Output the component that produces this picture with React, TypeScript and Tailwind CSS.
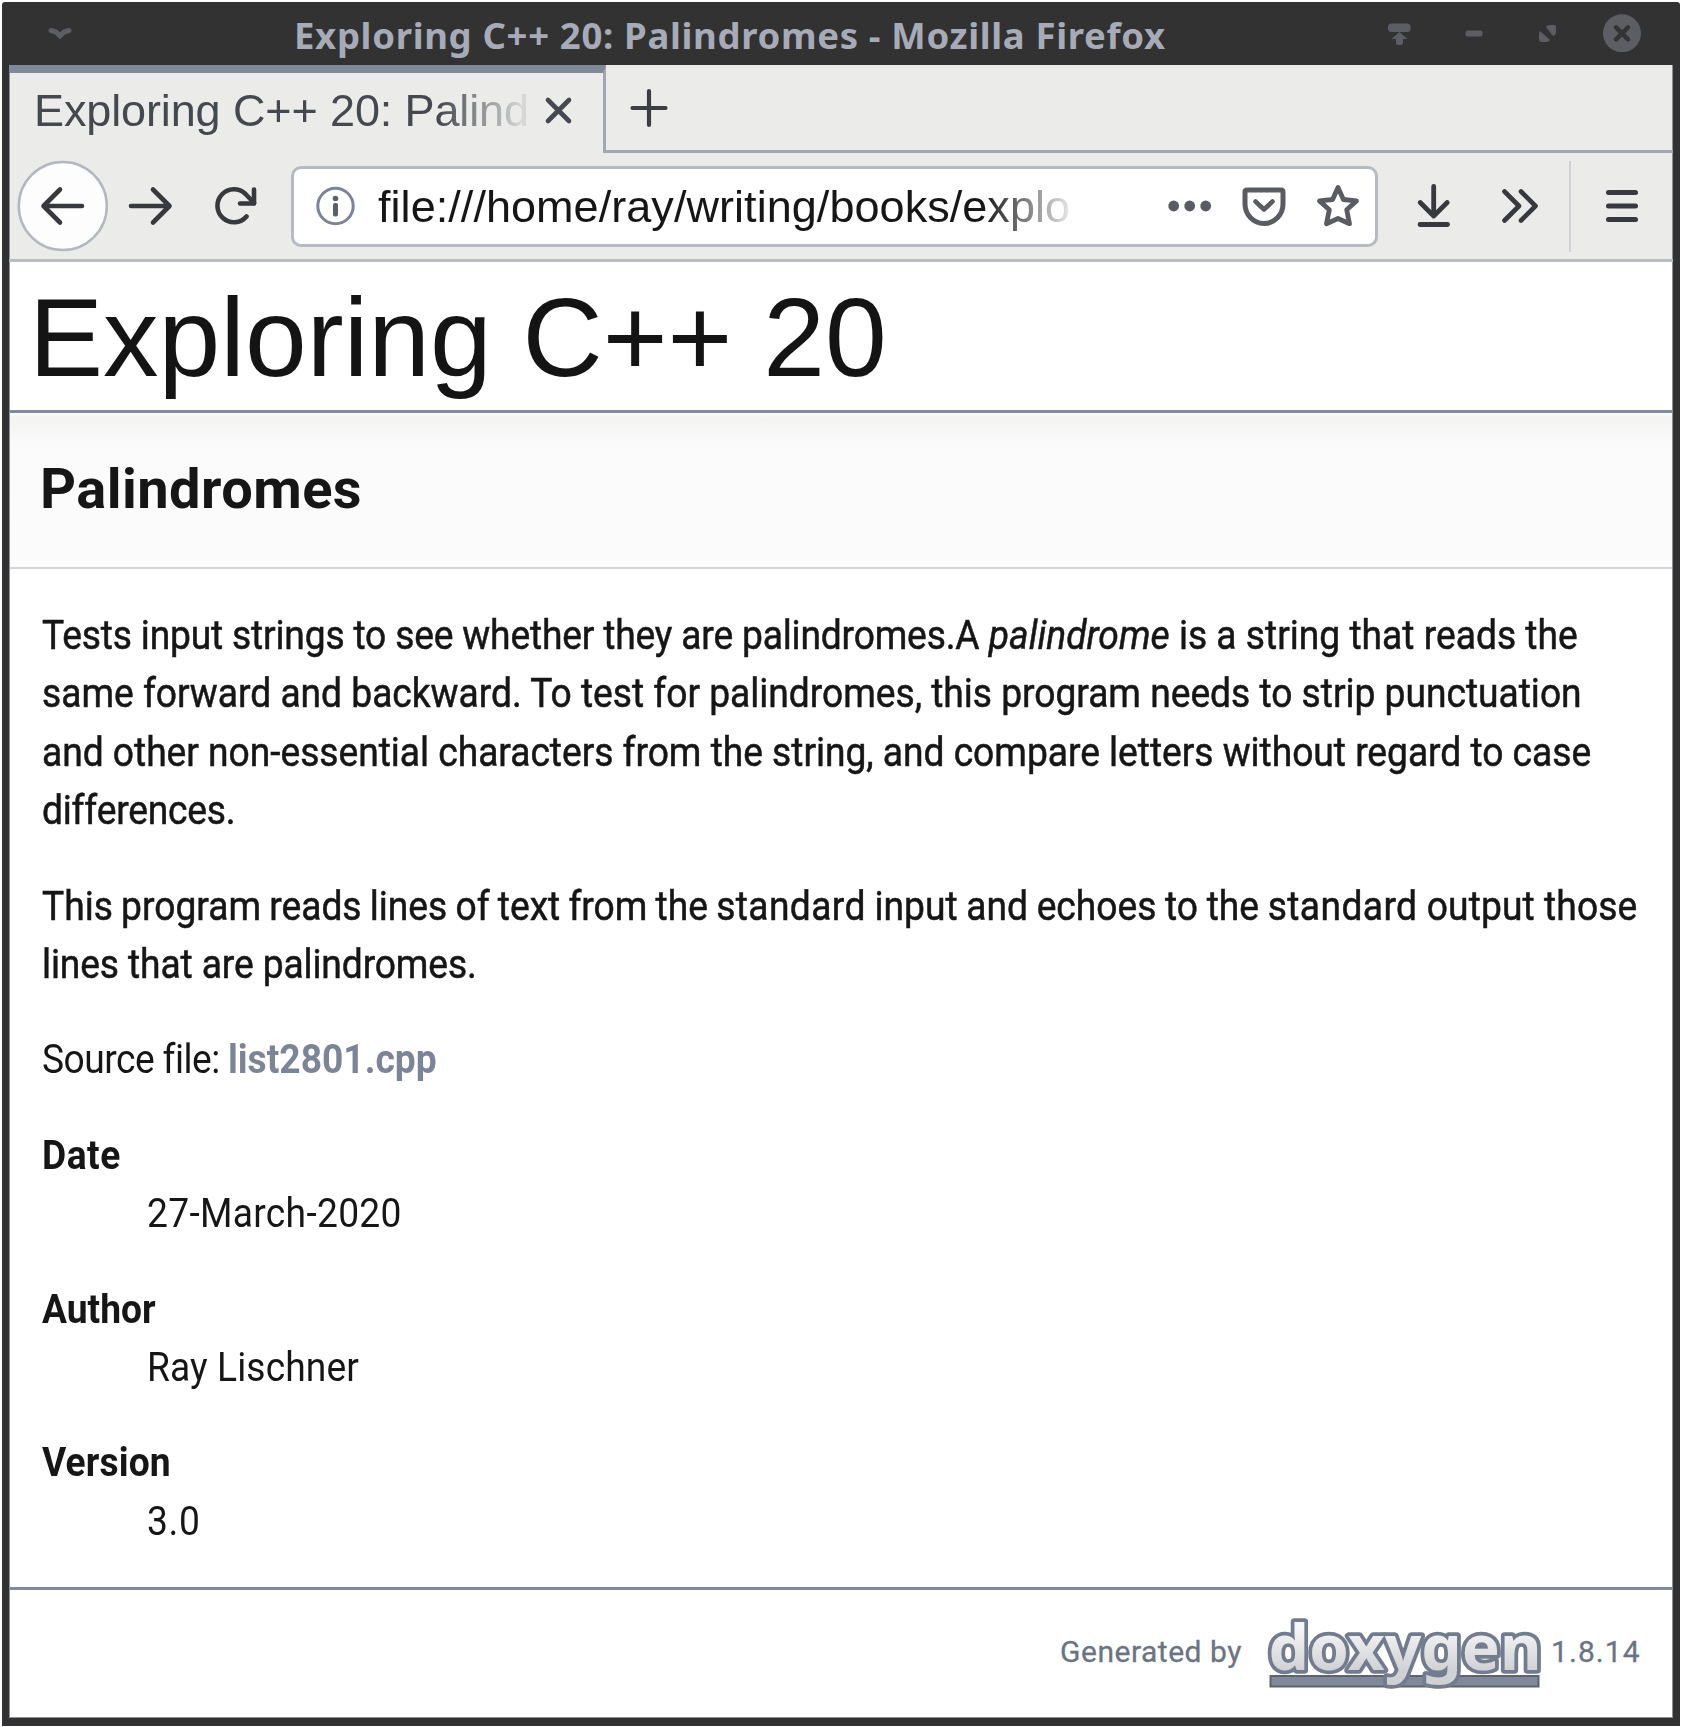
import React, { type ReactNode } from 'react';

function Icon({ box, className = '', children }: { box: string; className?: string; children: ReactNode }) {
  const [, , w, h] = box.split(' ');
  return (
    <svg
      viewBox={box}
      width={w}
      height={h}
      fill="none"
      stroke="currentColor"
      strokeWidth={4.6}
      strokeLinecap="round"
      strokeLinejoin="round"
      className={`block shrink-0 ${className}`}
    >
      {children}
    </svg>
  );
}

function TitleBar() {
  return (
    <header className="flex h-[63px] shrink-0 items-start text-[#5c5e64]">
      <Icon box="46 20 30 26" className="ml-[44px] mt-[18px]">
        <path d="M51 30.500l5 1.500l4 4l4 -4l5 -1.500" strokeWidth={5} strokeLinejoin="miter" />
      </Icon>
      <h1 className="ml-[218px] mt-[8px] w-[900px] whitespace-nowrap font-['Noto_Sans'] text-[36.500px] font-bold leading-[50px] tracking-[0.670px] text-[#a6abb7]">
        Exploring C++ 20: Palindromes - Mozilla Firefox
      </h1>
      <Icon box="1384 14 32 38" className="ml-[190px] mt-[12px]">
        <g fill="currentColor" stroke="none">
          <rect x="1388" y="23.500" width="22.500" height="8.500" rx="3.500" />
          <path d="M1399.500 32l8 7h-4.500v4q0 2 -3.500 2t-3.500 -2v-4h-4.500z" />
        </g>
      </Icon>
      <Icon box="1462 14 24 38" className="ml-[46px] mt-[12px]">
        <rect x="1465.500" y="30.500" width="17" height="6" rx="2.500" fill="currentColor" stroke="none" />
      </Icon>
      <Icon box="1534 14 28 38" className="ml-[48px] mt-[12px]">
        <g fill="currentColor" stroke="none">
          <path d="M1546 27q1 -2 4 -2h4q2 0 2 2v5q0 3 -3 4z" />
          <path d="M1540 31l10 9q-1 2 -4 2h-4q-3 0 -3 -3v-5q0 -2 1 -3z" />
        </g>
      </Icon>
      <Icon box="1602 14 40 38" className="ml-[40px] mt-[12px]">
        <circle cx="1622" cy="33.300" r="19" fill="currentColor" stroke="none" />
        <path d="M1616 27.300l12 12m0 -12l-12 12" stroke="#333" strokeWidth={4.500} />
      </Icon>
    </header>
  );
}

function TabStrip() {
  return (
    <div className="flex h-[88px] shrink-0 text-[#3c3e43]">
      <div className="flex w-[597px] shrink-0 border-r-[3px] border-t-[8px] border-r-[#a1a6b2] border-t-[#7f899b] text-[#45484e]">
        <div className="ml-[25px] mt-[11px] w-[495px] overflow-hidden whitespace-nowrap font-['Liberation_Sans'] text-[45px] leading-[54px] tracking-[-0.120px] [mask-image:linear-gradient(to_right,black_405px,rgba(0,0,0,0.12)_488px)]">
          Exploring C++ 20: Palind
        </div>
        <Icon box="540 90 36 42" className="ml-[11px] mt-[17px]">
          <path d="M548 100l21 21m0 -21l-21 21" />
        </Icon>
      </div>
      <div className="flex flex-1 border-b-[3px] border-[#a1a6b2]">
        <Icon box="626 84 46 48" className="ml-[20px] mt-[19px]">
          <path d="M632.500 108h33m-16.500 -17v34" strokeWidth={4.200} />
        </Icon>
      </div>
    </div>
  );
}

function AddressBox() {
  return (
    <div className="ml-[29px] flex h-[81px] w-[1087px] shrink-0 items-center rounded-[10px] border-[3px] border-[#b6bac3] bg-white">
      <Icon box="315 185 42 42" className="ml-[21px] text-[#7c8597]">
        <circle cx="335.500" cy="206" r="17.700" strokeWidth={3} />
        <g fill="#5c6068" stroke="none">
          <circle cx="335.500" cy="198.500" r="2.800" />
          <rect x="333" y="203" width="5" height="13.500" rx="2" />
        </g>
      </Icon>
      <div className="ml-[21px] mt-[2px] w-[701px] overflow-hidden whitespace-nowrap font-['Liberation_Sans'] text-[45px] leading-[60px] tracking-[0.050px] text-[#161616] [mask-image:linear-gradient(to_right,black_605px,rgba(0,0,0,0.12)_690px)]">
        file:///home/ray/writing/books/explo
      </div>
      <Icon box="1166 185 48 42" className="ml-[87px] text-[#5a5c61]">
        <g fill="currentColor" stroke="none">
          <circle cx="1173.700" cy="206" r="5.400" />
          <circle cx="1189.700" cy="206" r="5.400" />
          <circle cx="1205.700" cy="206" r="5.400" />
        </g>
      </Icon>
      <Icon box="1240 183 48 46" className="ml-[26px] text-[#5a5c61]">
        <path d="M1247 190h34q2 0 2 2v12a19 19.500 0 0 1 -38 0v-12q0 -2 2 -2z" strokeWidth={5} />
        <path d="M1255.500 201.500l8.500 8l8.500 -8" />
      </Icon>
      <Icon box="1314 181 48 50" className="ml-[26px] text-[#5a5c61]">
        <path d="M1338 187.500l5.400 12l13.100 1.400l-9.800 8.800l2.800 14l-11.500 -5.200l-11.500 5.200l2.800 -14l-9.800 -8.800l13.100 -1.400z" strokeWidth={4.800} />
      </Icon>
    </div>
  );
}

function Toolbar() {
  return (
    <nav className="flex h-[109px] shrink-0 items-center border-b-[3px] border-[#b9bcc4] text-[#37393e]">
      <Icon box="17 159 92 94" className="ml-[8px]">
        <ellipse cx="62.800" cy="206" rx="44" ry="44" fill="#fdfdfd" stroke="#b3b7c0" strokeWidth={2.500} />
        <path d="M82 206h-38m16 -16.500l-16.500 16.500l16.500 16.500" />
      </Icon>
      <Icon box="124 180 52 52" className="ml-[15px]">
        <path d="M131 206h38m-16 -16.500l16.500 16.500l-16.500 16.500" />
      </Icon>
      <Icon box="210 180 52 52" className="ml-[34px]">
        <path d="M246.500 216.500a16.500 16.500 0 1 1 -1 -22.500l8.500 9" />
        <path d="M254 189.500v14h-14" />
      </Icon>
      <AddressBox />
      <Icon box="1410 180 48 52" className="ml-[32px]">
        <path d="M1433.700 186.500v29m-13.500 -13l13.500 13.500l13.500 -13.500M1420 224.500h27.500" strokeWidth={4.800} />
      </Icon>
      <Icon box="1495 180 48 52" className="ml-[37px]">
        <path d="M1504.500 191.500l14.500 14.500l-14.500 14.500m16.500 -29l14.500 14.500l-14.500 14.500" />
      </Icon>
      <div className="ml-[26px] h-[91px] w-[2px] shrink-0 bg-[#cfd1d6]" />
      <Icon box="1600 180 48 52" className="ml-[29px]">
        <path d="M1608.500 192.500h27m-27 13.500h27m-27 13.500h27" strokeWidth={5} />
      </Icon>
    </nav>
  );
}

/* One row of body copy, stretched slightly upward from its baseline. */
function Line({ className = '', children }: { className?: string; children: ReactNode }) {
  return (
    <div className={`h-[58.400px] origin-[0_42px] scale-y-[1.080] whitespace-nowrap leading-[58.400px] ${className}`}>
      {children}
    </div>
  );
}

function Field({ name, nameClass, valueClass, children }: { name: string; nameClass: string; valueClass: string; children: ReactNode }) {
  return (
    <dl>
      <dt>
        <Line className={`font-bold ${nameClass}`}>{name}</Line>
      </dt>
      <dd className="ml-[105px]">
        <Line className={valueClass}>{children}</Line>
      </dd>
    </dl>
  );
}

function DoxygenLogo() {
  return (
    <svg viewBox="1262 1600 284 100" width="284" height="100" className="block shrink-0">
      <defs>
        <linearGradient id="letters" x1="0" y1="0" x2="0" y2="1">
          <stop offset="0.300" stopColor="#f6f6f6" />
          <stop offset="0.800" stopColor="#cfd1d5" />
        </linearGradient>
      </defs>
      <rect x="1270.500" y="1675" width="268" height="10.500" fill="#7f899b" stroke="#5f636b" strokeWidth="2" />
      <g fontFamily="Noto Sans, sans-serif" fontWeight="700" fontSize="63" strokeLinejoin="round">
        <text
          x="1268.500"
          y="1668.500"
          fill="url(#letters)"
          stroke="#737c8e"
          strokeWidth="7.500"
          paintOrder="stroke"
          textLength="273"
          lengthAdjust="spacingAndGlyphs"
        >
          doxygen
        </text>
      </g>
    </svg>
  );
}

export default function App() {
  return (
    <div className="h-[1727px] w-[1682px] overflow-hidden bg-white pl-[2px] pt-[2px]">
      <div className="flex h-[1724px] w-[1678px] flex-col rounded-t-[3px] bg-[#323232]">
        <TitleBar />
        <div className="ml-[7px] mr-[7px] flex h-[1653px] flex-col border-x border-b border-[#8b909c] bg-[#ebebea]">
          <div className="-mx-px flex flex-col">
            <TabStrip />
            <Toolbar />
          </div>
          <div className="h-[151px] shrink-0 border-b-[3px] border-[#838b9b] bg-white">
            <div className="ml-[19px] mt-[12px] whitespace-nowrap font-['Liberation_Sans'] text-[111px] leading-[128px] text-[#141414]">
              Exploring C++ 20
            </div>
          </div>
          <div className="h-[156px] shrink-0 border-b-2 border-[#d3d4d7] bg-[linear-gradient(to_bottom,#fafafa_0px,#f4f4f3_5px,#f5f5f4_12px,#fafafa_30px,#fcfcfc_100%)]">
            <h2 className="ml-[30px] mt-[43px] font-[Roboto] text-[56px] font-bold leading-[66px] tracking-[0.450px] text-[#161616]">
              Palindromes
            </h2>
          </div>
          <main className="flex flex-1 flex-col gap-[37px] bg-white pl-[32px] pt-[38px] font-[Roboto] text-[37.200px] text-[#161616]">
            <p className="[-webkit-text-stroke:0.500px_#161616]">
              <Line>
                <span className="tracking-[-0.180px]">Tests input strings to see whether they are palindromes.</span>
                A <i>palindrome</i> is a string that reads the
              </Line>
              <Line className="tracking-[-0.020px]">
                same forward and backward. To test for palindromes, this program needs to strip punctuation
              </Line>
              <Line className="tracking-[-0.030px]">
                and other non-essential characters from the string, and compare letters without regard to case
              </Line>
              <Line className="tracking-[-0.200px]">differences.</Line>
            </p>
            <p className="[-webkit-text-stroke:0.500px_#161616]">
              <Line>
                <span className="[word-spacing:-1.050px]">This program reads lines of text from the </span>
                <span className="tracking-[0.400px]">standard</span>
                <span className="[word-spacing:-0.600px]"> input and echoes to the </span>
                <span className="tracking-[0.400px]">standard</span>
                <span className="tracking-[0.100px]"> output those</span>
              </Line>
              <Line className="tracking-[-0.120px]">lines that are palindromes.</Line>
            </p>
            <Line>
              <span className="tracking-[-0.500px] [word-spacing:-0.500px]">Source file: </span>
              <a className="font-bold text-[#7c8597]">list2801.cpp</a>
            </Line>
            <Field name="Date" nameClass="tracking-[0.500px]" valueClass="tracking-[0.300px]">27-March-2020</Field>
            <Field name="Author" nameClass="tracking-[0px]" valueClass="tracking-[0.100px]">Ray Lischner</Field>
            <Field name="Version" nameClass="tracking-[0.100px]" valueClass="tracking-[0.600px]">3.0</Field>
          </main>
          <footer className="flex h-[130px] shrink-0 items-start border-t-[3px] border-[#838b9b] bg-white font-[Roboto] text-[30px] leading-[36px] text-[#6b7384] [-webkit-text-stroke:0.300px_#6b7384]">
            <span className="ml-[1050px] mt-[44px] w-[202px] whitespace-nowrap tracking-[0.520px]">Generated by</span>
            <span className="mt-[11px]">
              <DoxygenLogo />
            </span>
            <span className="ml-[5px] mt-[44px] whitespace-nowrap tracking-[1.080px]">1.8.14</span>
          </footer>
        </div>
      </div>
    </div>
  );
}
